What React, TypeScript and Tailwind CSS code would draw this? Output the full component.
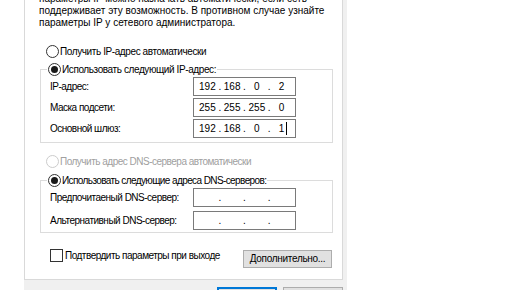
import React from "react";

const font = { fontFamily: '"Liberation Sans", Arial, sans-serif' };

function Radio({
  checked,
  disabled,
  label,
  track = "tracking-[-0.4px]",
}: {
  checked?: boolean;
  disabled?: boolean;
  label: string;
  track?: string;
}) {
  return (
    <div className={`flex items-center h-[14px] ${disabled ? "text-[#a0a0a0]" : "text-black"}`}>
      <span
        className={`w-[13px] h-[13px] shrink-0 rounded-full border flex items-center justify-center bg-white ${
          disabled ? "border-[#cccccc]" : "border-[#333333]"
        }`}
      >
        {checked && <span className="w-[7px] h-[7px] rounded-full bg-[#1a1a1a]" />}
      </span>
      <span className={`ml-[1px] whitespace-nowrap ${track}`}>{label}</span>
    </div>
  );
}

function IpBox({ parts, caret }: { parts: string[]; caret?: boolean }) {
  return (
    <div className="w-[103px] h-[19px] border border-[#7a7a7a] bg-white flex items-center px-[4px] text-black">
      {parts.map((p, i) => (
        <React.Fragment key={i}>
          <span className="w-[19px] text-center relative">
            {p}
            {caret && i === 3 && <span className="absolute top-[0px] right-[4px] w-[1px] h-[13px] bg-black" />}
          </span>
          {i < 3 && <span className="w-[6px] text-center">.</span>}
        </React.Fragment>
      ))}
    </div>
  );
}

function Row({ label, parts, caret }: { label: string; parts: string[]; caret?: boolean }) {
  return (
    <div className="flex items-center h-[19px] ml-[4px]">
      <span className="w-[143px] whitespace-nowrap tracking-[-0.5px]">{label}</span>
      <IpBox parts={parts} caret={caret} />
    </div>
  );
}

export default function App() {
  return (
    <div className="w-[516px] h-[290px] bg-white overflow-hidden text-[10px] leading-[13px]" style={font}>
      <div className="ml-[24px] w-[323px] h-[290px] bg-[#f0f0f0] flex flex-col">
        <div className="shrink-0 w-[319px] h-[280px] bg-white border-r border-b border-l border-[#d9d9d9] flex flex-col">
          <div className="pl-[14px] mt-[-7px] text-black leading-[12px]">
            <div className="whitespace-nowrap">параметры IP можно назначать автоматически, если сеть</div>
            <div className="whitespace-nowrap">поддерживает эту возможность. В противном случае узнайте</div>
            <div className="whitespace-nowrap">параметры IP у сетевого администратора.</div>
          </div>

          <div className="ml-[21px] mt-[15px]">
            <Radio label="Получить IP-адрес автоматически" />
          </div>

          <fieldset className="ml-[15px] mt-[4px] w-[293px] min-w-0 border border-[#dcdcdc] pl-[5px] pb-[4px]">
            <legend className="ml-[1px] px-[1px]">
              <Radio checked label="Использовать следующий IP-адрес:" />
            </legend>
            <div className="flex flex-col gap-[2px] mt-[1px]">
              <Row label="IP-адрес:" parts={["192", "168", "0", "2"]} />
              <Row label="Маска подсети:" parts={["255", "255", "255", "0"]} />
              <Row label="Основной шлюз:" parts={["192", "168", "0", "1"]} caret />
            </div>
          </fieldset>

          <div className="ml-[21px] mt-[11px]">
            <Radio disabled label="Получить адрес DNS-сервера автоматически" track="tracking-[-0.5px]" />
          </div>

          <fieldset className="ml-[15px] mt-[5px] w-[293px] min-w-0 border border-[#dcdcdc] pl-[5px] pb-[2px]">
            <legend className="ml-[1px] px-[1px]">
              <Radio checked label="Использовать следующие адреса DNS-серверов:" track="tracking-[-0.6px]" />
            </legend>
            <div className="flex flex-col gap-[4px] mt-[1px]">
              <Row label="Предпочитаеный DNS-сервер:" parts={["", "", "", ""]} />
              <Row label="Альтернативный DNS-сервер:" parts={["", "", "", ""]} />
            </div>
          </fieldset>

          <div className="flex items-start justify-between ml-[25px] mr-[10px] mt-[16px]">
            <div className="flex items-center">
              <span className="w-[13px] h-[13px] border border-[#333333] bg-white" />
              <span className="ml-[2px] whitespace-nowrap tracking-[-0.5px]">Подтвердить параметры при выходе</span>
            </div>
            <button className="mt-[1px] w-[89px] h-[18px] bg-[#e1e1e1] border border-[#adadad] text-black leading-[14px] tracking-[-0.3px]">
              Дополнительно...
            </button>
          </div>
        </div>
        <div className="shrink-0 flex justify-end gap-[6px] pr-[4px] mt-[7px]">
          <button className="w-[60px] h-[23px] bg-[#e1e1e1] border border-[#0078d7] shadow-[inset_0_0_0_1px_#0078d7]" />
          <button className="w-[60px] h-[23px] bg-[#e1e1e1] border border-[#adadad]" />
        </div>
      </div>
    </div>
  );
}
